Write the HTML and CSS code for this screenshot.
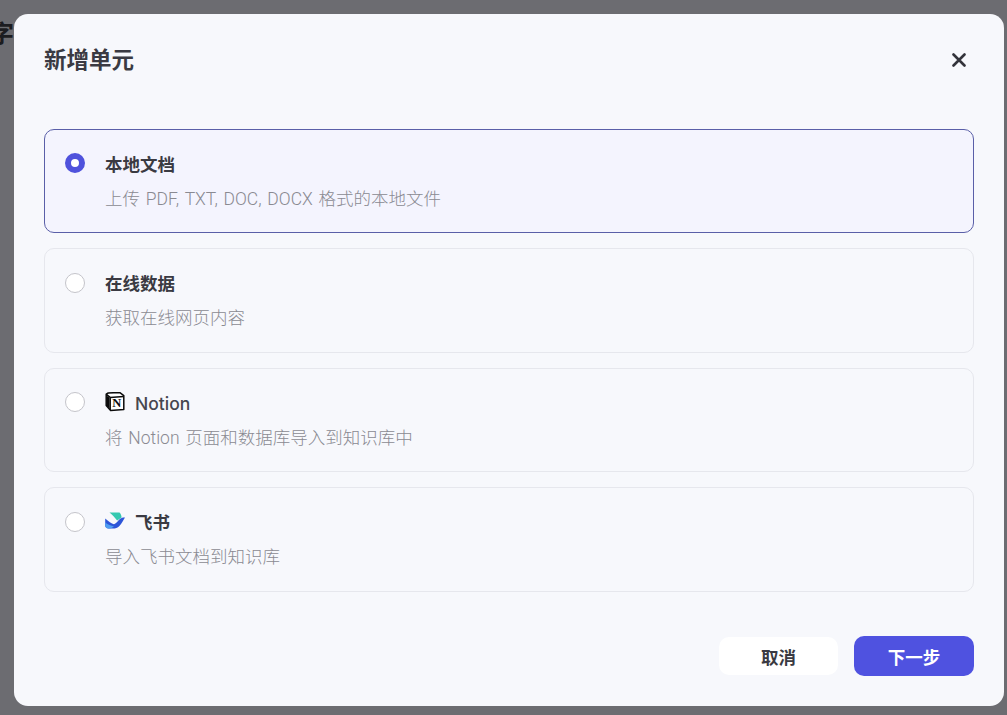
FILE: index.html
```html
<!DOCTYPE html>
<html lang="zh-CN">
<head>
<meta charset="utf-8">
<title>新增单元</title>
<link rel="stylesheet" href="styles.css">
</head>
<body>
<div class="backdrop-text">字</div>
<div class="overlay">
  <div class="modal">
    <header class="modal-head">
      <h2 class="modal-title">新增单元</h2>
      <svg class="close" width="14" height="14" viewBox="0 0 14 14"><path d="M1.5 1.5 12.5 12.5M12.5 1.5 1.5 12.5" stroke="#33333b" stroke-width="2.6" stroke-linecap="round"/></svg>
    </header>
    <div class="options">
      <div class="option selected">
        <span class="radio"></span>
        <div class="option-body">
          <div class="option-title">本地文档</div>
          <div class="option-desc">上传 PDF, TXT, DOC, DOCX 格式的本地文件</div>
        </div>
      </div>
      <div class="option">
        <span class="radio"></span>
        <div class="option-body">
          <div class="option-title">在线数据</div>
          <div class="option-desc">获取在线网页内容</div>
        </div>
      </div>
      <div class="option">
        <span class="radio"></span>
        <div class="option-body">
          <div class="option-title">
            <svg class="brand" width="20" height="20" viewBox="0 0 20 20">
              <path d="M3.2 1 14.6 0.4 18.8 3.6V17.4L5.6 18.4 1.2 13.6V2.2Z" fill="#fff" stroke="#0b0b0b" stroke-width="1.5" stroke-linejoin="round"/>
              <path d="M1.4 2.4 5.2 5.4V18M5.2 5.4 18.6 4.4" fill="none" stroke="#0b0b0b" stroke-width="1.5"/>
              <path d="M1.6 3.4 4.6 5.8V17L1.6 13.6Z" fill="#0b0b0b"/>
              <text class="notion-n" x="11.8" y="15.4" text-anchor="middle">N</text>
            </svg>
            <span class="brand-name">Notion</span>
          </div>
          <div class="option-desc">将 Notion 页面和数据库导入到知识库中</div>
        </div>
      </div>
      <div class="option">
        <span class="radio"></span>
        <div class="option-body">
          <div class="option-title">
            <svg class="brand" width="20" height="20" viewBox="0 0 20 20">
              <path d="M4.5 1.4H14.5C15.8 2.8 16.4 4.4 16.6 6.4L12.2 9.6C10 6.8 7.2 3.6 4.5 1.4Z" fill="#35c9b0"/>
              <path d="M0.2 7.6C3.5 10.6 6.5 12.6 9 13.2 11.5 12 13 9.8 14.6 8.2 16 7 18 6.4 20 6.6 18.4 9.2 16.8 12.6 14.4 15 12.6 16.8 10.4 17.6 8 17.6H3.4C1.4 17.6 0.2 16.2 0.2 14.6Z" fill="#2d55d8"/>
              <path d="M0.2 11.6C3 13.6 6 15 9 15.4 6.6 17 5 17.6 3.4 17.6 1.4 17.6 0.2 16.2 0.2 14.6Z" fill="#4f9ef0"/>
            </svg>
            <span>飞书</span>
          </div>
          <div class="option-desc">导入飞书文档到知识库</div>
        </div>
      </div>
    </div>
    <footer class="modal-foot">
      <button class="btn btn-cancel">取消</button>
      <button class="btn btn-next">下一步</button>
    </footer>
  </div>
</div>
</body>
</html>
```
FILE: styles.css
```css
* { box-sizing: border-box; }
html, body { height: 100%; }
body {
  margin: 0;
  background: #6c6c71;
  overflow: hidden;
  font-family: "Inter", "Noto Sans CJK SC", sans-serif;
  color: #33333b;
}
.backdrop-text {
  position: absolute;
  left: -10px;
  top: 19px;
  font-size: 24px;
  font-weight: 700;
  color: #1c1c20;
  line-height: 30px;
}
.overlay {
  position: fixed;
  inset: 0;
  padding: 14px 3px 9px 14px;
  display: flex;
}
.modal {
  flex: 1;
  background: #f7f8fc;
  border-radius: 14px;
  padding: 30px;
  display: flex;
  flex-direction: column;
}
.modal-head {
  display: flex;
  align-items: center;
  justify-content: space-between;
  height: 32px;
  padding-right: 8px;
}
.modal-title {
  margin: 0;
  font-size: 22.5px;
  font-weight: 700;
  line-height: 32px;
  color: #3a3a42;
}
.options {
  margin-top: 53px;
  display: flex;
  flex-direction: column;
  gap: 15.3px;
}
.option {
  height: 104.2px;
  border: 1px solid #e6e7ed;
  border-radius: 10px;
  padding: 21px 20px 0;
  display: flex;
  gap: 20px;
  background: #f7f8fc;
}
.option.selected {
  border-color: #5a5fa8;
  background: #f4f4fe;
}
.radio {
  flex: none;
  width: 20px;
  height: 20px;
  margin-top: 2.4px;
  border-radius: 50%;
  border: 1px solid #c4c4ca;
  background: #fff;
}
.selected .radio {
  border: 6px solid #4f52dc;
  margin-top: 2px;
}
.option-title {
  display: flex;
  align-items: center;
  gap: 10px;
  height: 24px;
  font-size: 17.5px;
  font-weight: 700;
  color: #3a3a42;
}
.brand { flex: none; }
.brand-name {
  padding-top: 3px;
  font-weight: 500;
  font-size: 17.5px;
  color: #46464e;
}
.notion-n {
  font-family: "Liberation Serif", serif;
  font-size: 12.5px;
  font-weight: 700;
  fill: #0b0b0b;
}
.option-desc {
  margin-top: 12px;
  font-family: "Roboto", "Noto Sans CJK SC", sans-serif;
  font-size: 17.5px;
  font-weight: 300;
  word-spacing: 1.5px;
  line-height: 24px;
  color: #8a8a92;
}
.modal-foot {
  margin-top: auto;
  display: flex;
  justify-content: flex-end;
  align-items: center;
  gap: 16px;
}
.btn {
  width: 120px;
  height: 40px;
  border: none;
  border-radius: 10px;
  font-family: inherit;
  font-size: 17.5px;
  font-weight: 700;
}
.btn-cancel {
  width: 119px;
  background: #fff;
  color: #3a3a42;
  height: 38px;
}
.btn-next {
  background: #4f52e0;
  color: #fff;
}
```
